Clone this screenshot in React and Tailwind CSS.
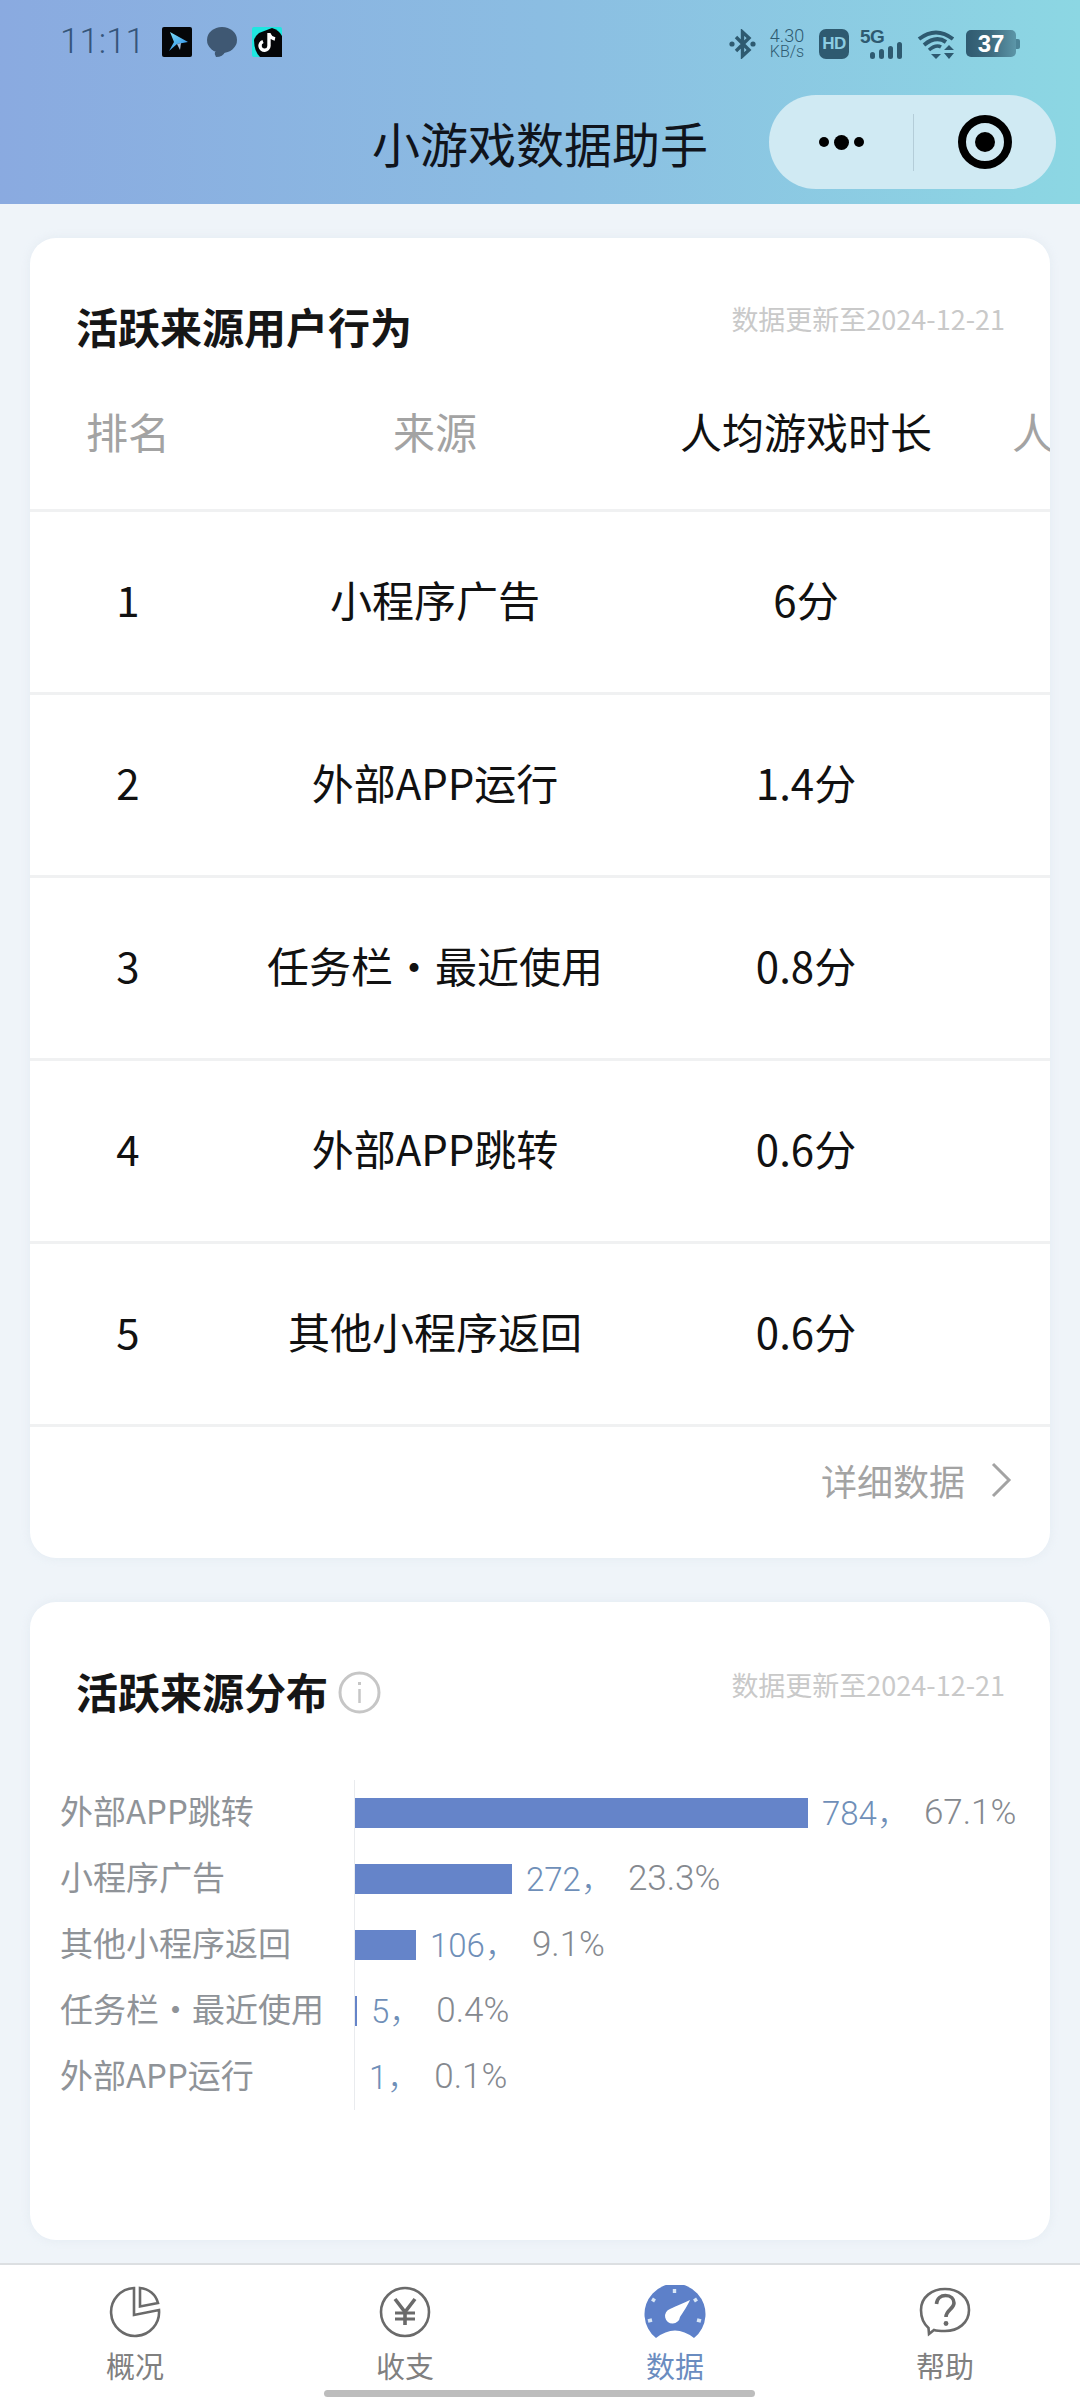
const sans = { fontFamily: '"Noto Sans CJK SC", sans-serif' }

const rows = [
  ['1', '小程序广告', '6分'],
  ['2', '外部APP运行', '1.4分'],
  ['3', '任务栏・最近使用', '0.8分'],
  ['4', '外部APP跳转', '0.6分'],
  ['5', '其他小程序返回', '0.6分'],
]

const bars = [
  ['外部APP跳转', 453, '784', '67.1%'],
  ['小程序广告', 157, '272', '23.3%'],
  ['其他小程序返回', 61, '106', '9.1%'],
  ['任务栏・最近使用', 2, '5', '0.4%'],
  ['外部APP运行', 0, '1', '0.1%'],
]

function AppIcons() {
  return (
    <div className="flex items-center gap-[15px]">
      <svg width="30" height="30" viewBox="0 0 30 30">
        <defs>
          <linearGradient id="arrow" x1="0" y1="0" x2="0.6" y2="1">
            <stop offset="0" stopColor="#7fe0f5" />
            <stop offset="1" stopColor="#2f8fe8" />
          </linearGradient>
        </defs>
        <rect width="30" height="30" rx="2" fill="#050608" />
        <path d="M8 5 L26 15 L15 17 L7 24 L12 15 Z" fill="url(#arrow)" />
        <path d="M15 17 L18 23 L19 16 Z" fill="#9fb8d8" />
      </svg>
      <svg width="30" height="30" viewBox="0 0 30 30">
        <ellipse cx="15" cy="13" rx="15" ry="13" fill="#3f5873" />
        <path d="M6 22 L18 25 L8 25 Q7 27 9 30 Q16 30 18 25 Z" fill="#3f5873" />
      </svg>
      <svg width="30" height="30" viewBox="0 0 30 30">
        <rect width="30" height="30" rx="2" fill="#1fe6e0" />
        <path d="M2 13 Q3 9 7 6 L20 1 Q27 3 30 9 L30 30 L8 30 Q2 24 2 13 Z" fill="#050608" />
        <path d="M17 6 L17 19 A4.5 4.5 0 1 1 11 14.5 M17 7 Q18.5 11 23 12" fill="none" stroke="#fff" strokeWidth="3.4" />
      </svg>
    </div>
  )
}

function SystemIcons() {
  const ink = '#2e5a70'
  return (
    <div className="flex items-center" style={{ color: ink }}>
      <svg width="27" height="30" viewBox="0 0 27 30" fill="none" stroke={ink}>
        <path d="M7 8 L20 21 L13.5 27 L13.5 3 L20 9 L7 22" strokeWidth="3.4" />
        <circle cx="3" cy="15" r="2.6" fill={ink} stroke="none" />
        <circle cx="24" cy="15" r="2.6" fill={ink} stroke="none" />
      </svg>
      <div className="ml-[12px] w-[38px] flex flex-col items-center font-['Roboto'] font-light leading-none">
        <span className="text-[18px] leading-[17px]">4.30</span>
        <span className="text-[16px] leading-[16px]">KB/s</span>
      </div>
      <div className="ml-[13px] w-[30px] h-[30px] rounded-[7px] bg-[#2e5a70] flex items-center justify-center font-['Liberation_Sans'] font-bold text-[17px] tracking-[-0.5px] text-[#8ccde2]">
        HD
      </div>
      <div className="ml-[11px] w-[46px] h-[30px] relative">
        <span className="absolute left-0 -top-[1px] font-['Liberation_Sans'] font-bold text-[19px] tracking-[-0.5px] leading-[18px]">5G</span>
        <svg className="absolute left-0 top-0" width="46" height="30" viewBox="0 0 46 30" fill={ink}>
          <rect x="10" y="23" width="5" height="7" rx="2.5" />
          <rect x="19" y="20" width="5" height="10" rx="2.5" />
          <rect x="28" y="17" width="5" height="13" rx="2.5" />
          <rect x="37" y="13" width="5" height="17" rx="2.5" />
        </svg>
      </div>
      <svg className="ml-[11px]" width="38" height="30" viewBox="0 0 38 30" fill="none" stroke={ink}>
        <path d="M2 10 Q19 -3 36 10" strokeWidth="4" />
        <path d="M7 16 Q19 6 29 13" strokeWidth="4" />
        <path d="M12 21 Q19 15 24 18" strokeWidth="3.6" />
        <path d="M14 25 L24 25 L19 30 Z" fill={ink} stroke="none" />
        <path d="M27 21 L32 16 L37 21 Z M27 24 L37 24 L32 30 Z" fill={ink} stroke="none" />
      </svg>
      <div className="ml-[11px] flex items-center">
        <div className="w-[50px] h-[27px] rounded-[5px] bg-gradient-to-r from-[#2f5a70] via-[#3f6c80] to-[#5c96a8] flex items-center justify-center font-['Liberation_Sans'] font-bold text-[24px] text-white">
          37
        </div>
        <div className="w-[4px] h-[10px] rounded-r-[2px] bg-[#4c8497]" />
      </div>
    </div>
  )
}

function Header() {
  return (
    <header className="h-[204px] shrink-0 bg-gradient-to-r from-[#8aaae0] via-[#8bbde2] to-[#8cd7e3]">
      <div className="h-[95px] pl-[60px] pr-[60px] pt-[27px] flex items-start justify-between">
        <div className="flex items-center h-[30px]">
          <span className="w-[102px] font-['Roboto'] font-light text-[35px] leading-[30px] text-[#35557a]">11:11</span>
          <AppIcons />
        </div>
        <SystemIcons />
      </div>
      <div className="h-[94px] px-[24px] grid grid-cols-[1fr_auto_1fr] items-center">
        <div />
        <h1 className="text-[48px] leading-none text-[#10141c] font-normal" style={sans}>小游戏数据助手</h1>
        <div className="justify-self-end w-[287px] h-[94px] rounded-full bg-[#d0eaf3] flex items-center">
          <div className="w-[144px] flex items-center justify-center gap-[5px]">
            <span className="w-[10px] h-[10px] rounded-full bg-black" />
            <span className="w-[15px] h-[15px] rounded-full bg-black" />
            <span className="w-[10px] h-[10px] rounded-full bg-black" />
          </div>
          <div className="w-px h-[57px] bg-[#b4cdd8]" />
          <div className="flex-1 flex items-center justify-center">
            <div className="w-[54px] h-[54px] rounded-full border-[8px] border-black flex items-center justify-center">
              <span className="w-[20px] h-[20px] rounded-full bg-black" />
            </div>
          </div>
        </div>
      </div>
    </header>
  )
}

function SourceTable() {
  return (
    <section className="h-[1320px] shrink-0 rounded-[26px] bg-white overflow-hidden flex flex-col shadow-[0_0_10px_rgba(210,222,232,0.4)]" style={sans}>
      <div className="pt-[62px] pl-[46px] pr-[45px] flex justify-between">
        <h2 className="text-[42px] leading-[52px] font-bold text-[#161616]">活跃来源用户行为</h2>
        <span className="text-[27px] leading-[38px] text-[#c9c9c9]">数据更新至2024-12-21</span>
      </div>
      <div className="pt-[53px] pb-[52px] flex text-[42px] leading-[52px] text-center border-b-[3px] border-[#f0f1f2]">
        <span className="w-[196px] shrink-0 text-[#a3a3a3]">排名</span>
        <span className="w-[418px] shrink-0 text-[#a3a3a3]">来源</span>
        <span className="w-[324px] shrink-0 text-[#111]">人均游戏时长</span>
        <span className="w-[340px] shrink-0 text-[#a3a3a3]">人均游戏次数</span>
      </div>
      {rows.map(([rank, source, time]) => (
        <div key={rank} className="h-[183px] shrink-0 pb-[7px] flex items-center text-center text-[42px] text-[#111] border-b-[3px] border-[#f0f1f2]">
          <span className="w-[196px] shrink-0">{rank}</span>
          <span className="w-[418px] shrink-0">{source}</span>
          <span className="w-[324px] shrink-0">{time}</span>
        </div>
      ))}
      <div className="flex-1 pb-[26px] pr-[38px] flex items-center justify-end gap-[25px] text-[36px] text-[#a3a3a3]">
        <span>详细数据</span>
        <svg width="22" height="36" viewBox="0 0 22 36" fill="none" stroke="#a3a3a3" strokeWidth="3">
          <path d="M3 2 L19 18 L3 34" />
        </svg>
      </div>
    </section>
  )
}

function SourceChart() {
  return (
    <section className="h-[638px] shrink-0 rounded-[26px] bg-white overflow-hidden shadow-[0_0_10px_rgba(210,222,232,0.4)]" style={sans}>
      <div className="pt-[63px] pl-[46px] pr-[45px] flex justify-between">
        <div className="flex items-center gap-[10px]">
          <h2 className="text-[42px] leading-[52px] font-bold text-[#161616]">活跃来源分布</h2>
          <svg className="mt-[2px]" width="43" height="43" viewBox="0 0 43 43" fill="none" stroke="#c6c6c6">
            <circle cx="21.5" cy="21.5" r="19.5" strokeWidth="3" />
            <path d="M21.5 18 L21.5 32" strokeWidth="2.5" />
            <path d="M21.5 11 L21.5 14" strokeWidth="3" />
          </svg>
        </div>
        <span className="text-[27px] leading-[40px] text-[#c9c9c9]">数据更新至2024-12-21</span>
      </div>
      <div className="mt-[63px] pl-[30px]">
        {bars.map(([label, width, count, share]) => (
          <div key={label} className="h-[66px] flex items-center">
            <span className="w-[294px] shrink-0 pb-[5px] text-[33px] text-[#8f9398] whitespace-nowrap">{label}</span>
            <div className="h-full flex-1 flex items-center border-l border-[#e9ebee]">
              <div className="h-[30px] bg-[#6584c9]" style={{ width }} />
              <span className="ml-[14px] text-[33px] text-[#6f8fb8] font-['Roboto'] font-light whitespace-nowrap">{count}<span style={sans}>，</span></span>
              <span className="ml-[14px] text-[35px] text-[#85898f] font-['Roboto'] font-light whitespace-nowrap">{share}</span>
            </div>
          </div>
        ))}
      </div>
    </section>
  )
}

function PieIcon() {
  return (
    <svg width="52" height="52" viewBox="0 0 52 52" fill="none" stroke="#6a6a6a" strokeWidth="2.6">
      <path d="M25 2 A24 24 0 1 0 50 24 L25 29 Z" />
      <path d="M31 2 A20 20 0 0 1 49 17 L31 20.5 Z" />
    </svg>
  )
}

function YenIcon() {
  return (
    <svg width="52" height="52" viewBox="0 0 52 52" fill="none" stroke="#6a6a6a">
      <circle cx="26" cy="26" r="24" strokeWidth="2.6" />
      <path d="M16 13 L26 26 L36 13 M26 26 L26 39" strokeWidth="3.6" />
      <path d="M16 27 L36 27 M16 33 L36 33" strokeWidth="3" />
    </svg>
  )
}

function GaugeIcon() {
  return (
    <svg width="62" height="54" viewBox="0 0 62 54">
      <path d="M12 53 A30.5 30.5 0 1 1 50 53 Q31 38 12 53 Z" fill="#5d80c9" />
      <g stroke="#d8e6f6" strokeWidth="3.4">
        <path d="M30.5 4 L30.5 8" />
        <path d="M8 14 L11 16" />
        <path d="M53 14 L50 16" />
        <path d="M4 36 L8 35" />
        <path d="M57 36 L53 35" />
      </g>
      <path d="M46 15 C44 20 38 29 36 32 A7.5 7.5 0 1 1 26 24 C32 21 40 18 46 15 Z" fill="#fff" />
    </svg>
  )
}

function HelpIcon() {
  return (
    <svg width="52" height="50" viewBox="0 0 52 50" fill="none" stroke="#6a6a6a" strokeWidth="2.6">
      <path d="M26 2 C39 2 50 10 50 23 C50 36 39 44 26 44 C22 44 18 44 15 43 L10 47 L9.5 41 C5 37 2 31 2 23 C2 10 13 2 26 2 Z" />
      <path d="M17.5 17 C18 11 22 8.5 26.5 8.5 C32 8.5 35 12 35 16 C35 22 27 23 27 30" strokeWidth="3.6" />
      <circle cx="27" cy="36.5" r="2.4" fill="#6a6a6a" stroke="none" />
    </svg>
  )
}

function TabBar() {
  const tabs = [
    ['概况', <PieIcon />, false],
    ['收支', <YenIcon />, false],
    ['数据', <GaugeIcon />, true],
    ['帮助', <HelpIcon />, false],
  ]
  return (
    <nav className="h-[137px] shrink-0 bg-white border-t-2 border-[#dcdfe2] grid grid-cols-4 pt-[20px]" style={sans}>
      {tabs.map(([label, icon, active]) => (
        <div key={label} className="flex flex-col items-center">
          <div className="h-[54px] flex items-center justify-center">{icon}</div>
          <span className={active ? 'mt-[6px] text-[29px] leading-[40px] text-[#6a8cc0]' : 'mt-[6px] text-[29px] leading-[40px] text-[#808080]'}>{label}</span>
        </div>
      ))}
    </nav>
  )
}

export default function App() {
  return (
    <div className="relative w-[1080px] h-[2400px] overflow-hidden flex flex-col bg-[#eff4f9]">
      <Header />
      <main className="flex-1 min-h-0 px-[30px] pt-[34px] flex flex-col gap-[44px] overflow-hidden">
        <SourceTable />
        <SourceChart />
      </main>
      <TabBar />
      {/* Home indicator */}
      <div className="absolute bottom-[3px] left-[324px] w-[431px] h-[7px] rounded-full bg-[#bdbdbd]" />
    </div>
  )
}
